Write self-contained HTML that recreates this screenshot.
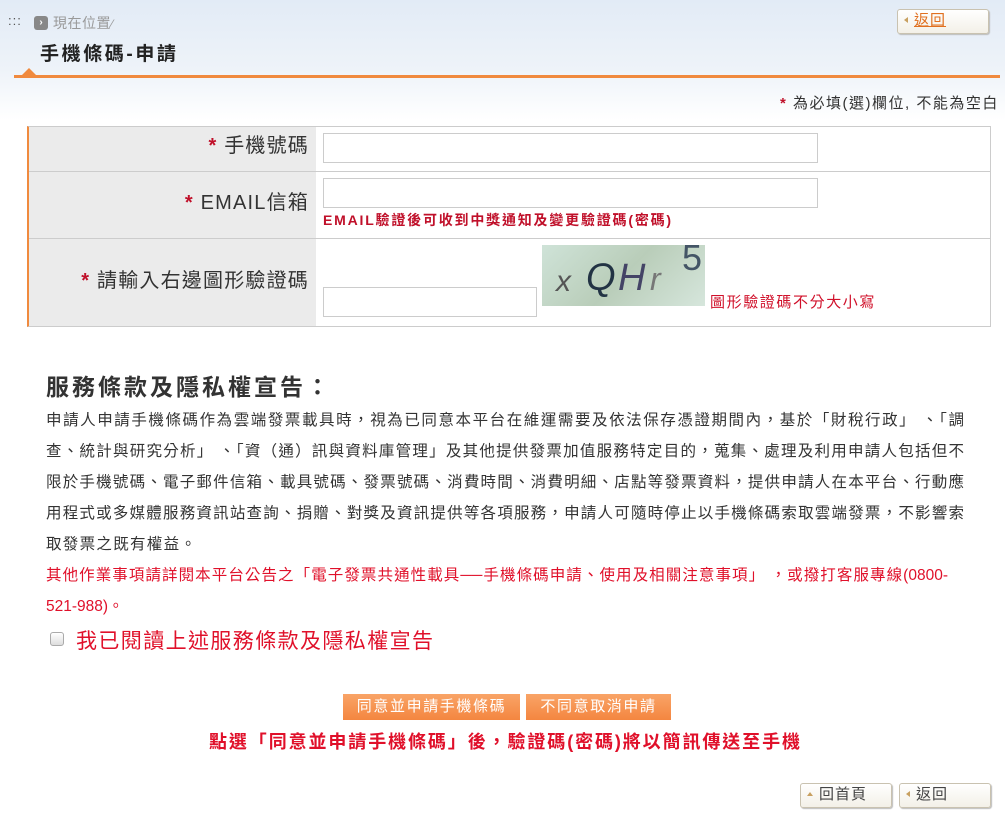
<!DOCTYPE html>
<html><head><meta charset="utf-8"><style>
*{box-sizing:border-box}
body{margin:0;width:1005px;height:827px;overflow:hidden;font-family:"Liberation Sans","Noto Sans CJK TC",sans-serif;background:linear-gradient(#e2ebf6 0,#eef3f9 70px,#fff 120px);position:relative;color:#333}
.abs{position:absolute}
.btn{position:absolute;border:1px solid #c9c2b0;border-radius:3px;background:linear-gradient(#fff,#f3f0e8);font-size:15px;height:25px;line-height:22px;color:#444;box-shadow:1px 1px 1px #bbb;letter-spacing:1px}
.btn i{display:inline-block;width:0;height:0;border-top:3px solid transparent;border-bottom:3px solid transparent;border-right:4px solid #c8a060;margin:0 6px 2px 6px;vertical-align:middle}
.lab{background:#ebebeb;text-align:right;font-size:20px;letter-spacing:1.2px;color:#333;padding-right:7px}
.star{color:#c0102a;font-weight:bold}
.inp{position:absolute;border:1px solid #ccc;background:#fff;height:30px}
.ob{position:absolute;top:694px;height:26px;background:linear-gradient(#f9a467,#f48640);color:#fff;font-size:15px;letter-spacing:1.6px;text-align:center;line-height:26px}
.p div{text-align:justify;text-align-last:justify;height:31px;white-space:nowrap}
</style></head><body>
<div class="abs" style="left:8px;top:13px;font-size:13px;color:#555;letter-spacing:1px">:::</div>
<div class="abs" style="left:34px;top:16px;width:14px;height:14px;background:#888;border-radius:3px;color:#fff;font-size:10px;line-height:14px;text-align:center;font-weight:bold">›</div>
<div class="abs" style="left:53px;top:13px;font-size:14px;color:#999;letter-spacing:0.5px">現在位置<span style="font-size:12px">⁄</span></div>
<div class="abs" style="left:40px;top:39px;font-size:19px;font-weight:bold;color:#222;letter-spacing:2.6px">手機條碼-申請</div>
<div class="abs" style="left:14px;top:75px;width:986px;height:3px;background:#f08a3e"></div>
<div class="abs" style="left:21px;top:68px;width:0;height:0;border-left:8px solid transparent;border-right:8px solid transparent;border-bottom:8px solid #f08a3e"></div>
<div class="btn" style="left:897px;top:9px;width:92px;color:#e07020"><i></i><u>返回</u></div>
<div class="abs" style="left:780px;top:92px;font-size:15px;color:#333;letter-spacing:1.5px"><span class="star">*</span> 為必填(選)欄位, 不能為空白</div>

<div class="abs" style="left:27px;top:126px;width:964px;height:201px;border:1px solid #ccc;border-left:2px solid #f08a3e;background:#fff"></div>
<div class="abs lab" style="left:29px;top:127px;width:287px;height:44px;line-height:38px"><span class="star">*</span> 手機號碼</div>
<div class="abs lab" style="left:29px;top:172px;width:287px;height:66px;line-height:62px"><span class="star">*</span> EMAIL信箱</div>
<div class="abs lab" style="left:29px;top:239px;width:287px;height:87px;line-height:84px"><span class="star">*</span> 請輸入右邊圖形驗證碼</div>
<div class="abs" style="left:29px;top:171px;width:961px;height:1px;background:#ccc"></div>
<div class="abs" style="left:29px;top:238px;width:961px;height:1px;background:#ccc"></div>
<div class="inp" style="left:323px;top:133px;width:495px"></div>
<div class="inp" style="left:323px;top:178px;width:495px"></div>
<div class="abs" style="left:323px;top:210px;font-size:14px;font-weight:bold;color:#c0102a;letter-spacing:1.8px">EMAIL驗證後可收到中獎通知及變更驗證碼(密碼)</div>
<div class="inp" style="left:323px;top:287px;width:214px"></div>
<div class="abs" style="left:542px;top:245px;width:163px;height:61px;background:linear-gradient(135deg,#cfe3d8,#b9cdb9,#d6e6dc);overflow:hidden;font-style:italic;font-size:38px">
<span class="abs" style="left:14px;top:20px;font-size:30px;color:#555">x</span>
<span class="abs" style="left:44px;top:12px;color:#234">Q</span>
<span class="abs" style="left:76px;top:12px;color:#446">H</span>
<span class="abs" style="left:108px;top:16px;font-size:32px;color:#777">r</span>
<span class="abs" style="left:140px;top:-8px;font-style:normal;font-size:36px;color:#456">5</span></div>
<div class="abs" style="left:710px;top:291px;font-size:15px;color:#d0102a;letter-spacing:1.6px">圖形驗證碼不分大小寫</div>

<div class="abs" style="left:46px;top:368px;font-size:23px;font-weight:bold;color:#333;letter-spacing:3px">服務條款及隱私權宣告：</div>
<div class="abs p" style="left:46px;top:405px;width:918px;font-size:15.5px;line-height:31px;color:#333">
<div>申請人申請手機條碼作為雲端發票載具時，視為已同意本平台在維運需要及依法保存憑證期間內，基於「財稅行政」 、「調</div>
<div>查、統計與研究分析」 、「資（通）訊與資料庫管理」及其他提供發票加值服務特定目的，蒐集、處理及利用申請人包括但不</div>
<div>限於手機號碼、電子郵件信箱、載具號碼、發票號碼、消費時間、消費明細、店點等發票資料，提供申請人在本平台、行動應</div>
<div>用程式或多媒體服務資訊站查詢、捐贈、對獎及資訊提供等各項服務，申請人可隨時停止以手機條碼索取雲端發票，不影響索</div>
<div style="text-align-last:left;letter-spacing:1.3px">取發票之既有權益。</div>
<div style="color:#e0102a;width:902px">其他作業事項請詳閱本平台公告之「電子發票共通性載具──手機條碼申請、使用及相關注意事項」 ，或撥打客服專線(0800-</div>
<div style="color:#e0102a;text-align-last:left">521-988)。</div>
</div>
<div class="abs" style="left:50px;top:632px;width:14px;height:14px;border:1px solid #aaa;border-radius:3px;background:linear-gradient(#fff,#ddd)"></div>
<div class="abs" style="left:76px;top:625px;font-size:21px;color:#e0102a;letter-spacing:1.4px">我已閱讀上述服務條款及隱私權宣告</div>

<div class="ob" style="left:343px;width:177px">同意並申請手機條碼</div>
<div class="ob" style="left:526px;width:145px">不同意取消申請</div>
<div class="abs" style="left:209px;top:728px;font-size:18px;font-weight:bold;color:#e0102a;letter-spacing:1.9px">點選「同意並申請手機條碼」後，驗證碼(密碼)將以簡訊傳送至手機</div>
<div class="btn" style="left:800px;top:783px;width:92px"><i style="border:3px solid transparent;border-bottom:4px solid #c8a060;border-top:0"></i>回首頁</div>
<div class="btn" style="left:899px;top:783px;width:92px"><i></i>返回</div>
</body></html>
